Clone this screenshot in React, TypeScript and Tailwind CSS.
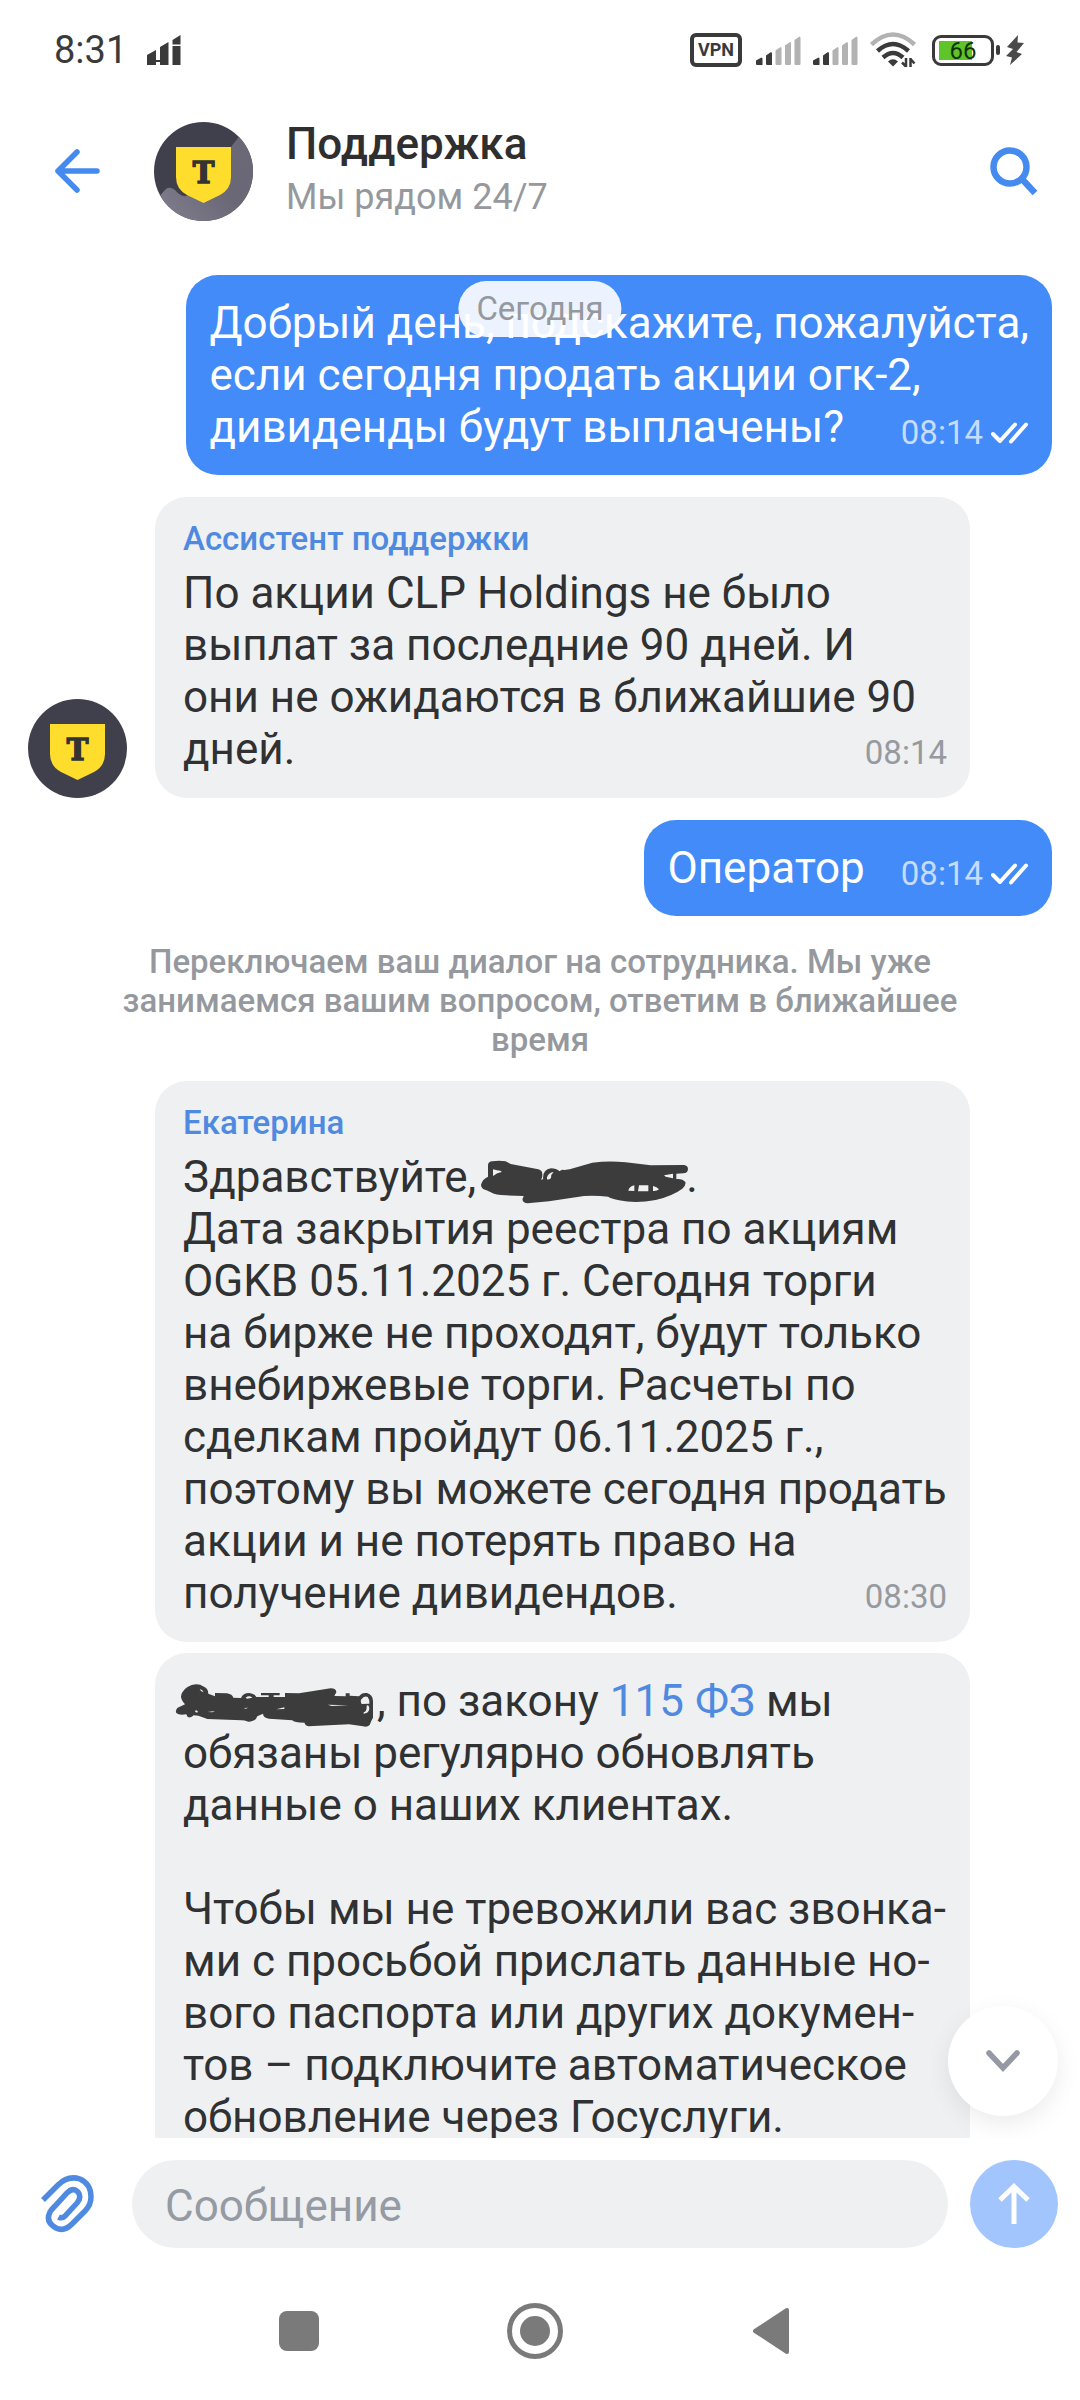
import type { ReactNode } from 'react';

/* ---------- Status bar icons ---------- */

function SignalBars() {
  return (
    <svg width="45" height="30" viewBox="0 0 45 30" aria-hidden="true">
      <path d="M0 25.5 L5.5 22.5 Q6.5 22.5 6.5 24 V30 H1 Q0 30 0 28.5Z" fill="#3a3a3a" />
      <path d="M10 20.5 L15 17 Q16 17 16 18.5 V30 H11 Q10 30 10 28.5Z" fill="#3a3a3a" />
      <path d="M19.500 15.500 L24.500 12 Q25.500 12 25.500 13.500 V28.500 Q25.500 30 24.500 30 H20.500 Q19.500 30 19.500 28.500Z" fill="#b2b2b2" />
      <path d="M29 10.500 L34 7 Q35 7 35 8.500 V28.500 Q35 30 34 30 H30 Q29 30 29 28.500Z" fill="#b2b2b2" />
      <path d="M38.500 5 L43.500 1.500 Q44.500 1.500 44.500 3 V28.500 Q44.500 30 43.500 30 H39.500 Q38.500 30 38.500 28.500Z" fill="#b2b2b2" />
    </svg>
  );
}

function WifiIcon() {
  return (
    <svg width="46" height="36" viewBox="0 0 46 36" fill="none" strokeWidth="4.500" aria-hidden="true">
      <path d="M1.500 12.500 Q23 -7.500 44.500 12.500" stroke="#b2b2b2" />
      <path d="M7.500 19 Q23 5 38.500 19" stroke="#3a3a3a" />
      <path d="M13 25.500 Q23 16.500 33 25.500" stroke="#3a3a3a" />
      <path d="M18 29.500 Q23 25 28 29.500 L23 34.500Z" fill="#3a3a3a" />
      <path d="M36 26 V35 M36 34.500 L32 30.500 M40.500 35 V26 M40.500 27 L44.500 31.500" stroke="#3a3a3a" strokeWidth="2.500" />
    </svg>
  );
}

function StatusBar() {
  return (
    <div className="flex h-[100px] shrink-0 items-center justify-between pr-14 pl-[54px]">
      <div className="flex items-center gap-5">
        <span className="text-[38px] text-[#3a3a3a]">8:31</span>
        <svg width="34" height="30" viewBox="0 0 34 30" fill="#3a3a3a" aria-hidden="true">
          <path d="M0 20 L9 15 V25 H13 V12 L21.500 7 V30 H13 V27 H9 V30 H0Z" />
          <path d="M25.500 5 L33.500 0 V9.500 H25.500Z M25.500 11 H33.500 V30 H25.500Z" />
        </svg>
      </div>
      <div className="flex items-center">
        <span className="flex h-[34px] w-[52px] items-center justify-center rounded-md border-4 border-[#3a3a3a] text-lg leading-none font-bold text-[#3a3a3a]">
          VPN
        </span>
        <span className="ml-3.5 flex gap-3">
          <SignalBars />
          <SignalBars />
        </span>
        <span className="ml-3">
          <WifiIcon />
        </span>
        <span className="ml-4 flex h-[31px] w-[62px] rounded-[9px] border-3 border-[#3a3a3a] bg-[linear-gradient(#5fc32a,#5fc32a)] bg-[length:33px_19px] bg-[position:4px_3px] bg-no-repeat">
          <span className="w-full text-center text-2xl leading-[26px] text-[#12320a]">66</span>
        </span>
        <span className="ml-0.5 h-2.5 w-1 rounded-sm bg-[#3a3a3a]" />
        <svg className="ml-1.5" width="18" height="30" viewBox="0 0 18 30" fill="#4a4a4a" aria-hidden="true">
          <path d="M12 0 L1 12 L7 14 L0 21 L6 22.500 L4 30 L16 19 L10.500 17 L18 8 L11.500 7.500Z" />
        </svg>
      </div>
    </div>
  );
}

/* ---------- Header ---------- */

function Avatar({ scenery = false }: { scenery?: boolean }) {
  return (
    <svg className="size-[99px] shrink-0 rounded-full" viewBox="0 0 99 99" role="img" aria-label="Поддержка">
      <defs>
        <linearGradient id="hill" x1="1" y1="0" x2="0" y2="1">
          <stop offset="0" stopColor="#6b6978" />
          <stop offset="0.5" stopColor="#6a6877" />
          <stop offset="1" stopColor="#83818f" />
        </linearGradient>
      </defs>
      <rect width="99" height="99" fill="#403f4c" />
      {scenery && (
        <path
          d="M0 80 L12 67 Q16 64 21 68 Q27 75 32 74 Q45 68 60 50 Q74 28 84 16 L99 0 V99 H0Z"
          fill="url(#hill)"
        />
      )}
      <path d="M22 25 H77 V55 Q77 67 66 73 L49.500 81 L33 73 Q22 67 22 55Z" fill="#ffdd2d" />
      <text
        x="49.500"
        y="61"
        textAnchor="middle"
        fontSize="29"
        fontWeight="700"
        fontFamily="'DejaVu Serif', serif"
        fill="#333333"
        stroke="#333333"
        strokeWidth="1.500"
      >
        T
      </text>
    </svg>
  );
}

function Header() {
  return (
    <header className="flex shrink-0 items-center px-9 py-[18px]">
      <button type="button" aria-label="Назад" className="flex w-20 justify-center">
        <svg width="48" height="48" viewBox="0 0 48 48" fill="none" stroke="#458bef" strokeWidth="5.500" strokeLinecap="round" strokeLinejoin="round">
          <path d="M45 24 H6 M25 5 L6 24 L25 43" />
        </svg>
      </button>
      <div className="ml-[38px]">
        <Avatar scenery />
      </div>
      <div className="ml-[33px] flex-1">
        <h1 className="text-[44px] leading-[52px] font-medium text-[#2f2f2f]">Поддержка</h1>
        <p className="text-4xl leading-[54px] text-[#95999e]">Мы рядом 24/7</p>
      </div>
      <button type="button" aria-label="Поиск" className="flex justify-center">
        <svg width="60" height="50" viewBox="0 0 60 50" fill="none" stroke="#458bef">
          <circle cx="26" cy="21" r="16.500" strokeWidth="6.500" />
          <path d="M38 33 L51 47" strokeWidth="6.500" />
        </svg>
      </button>
    </header>
  );
}

/* ---------- Messages ---------- */

function Ticks() {
  return (
    <svg width="38" height="22" viewBox="0 0 38 22" fill="none" stroke="#ffffff" strokeWidth="4" strokeLinecap="round" strokeLinejoin="round" aria-hidden="true">
      <path d="M2 12 L9 19 L24 2.500 M20 19.500 L35 2.500" />
    </svg>
  );
}

function Outgoing({ time, children }: { time: string; children: ReactNode }) {
  return (
    <div className="flex justify-end pr-7">
      <p className="rounded-[32px] bg-[#428bf9] px-[23px] py-[22px] text-[44px] leading-[52px] whitespace-pre-line text-white">
        {children}
        <span className="float-right mt-1.5 -mb-1.5 ml-9 flex items-center gap-2 text-[33px] text-[#c6dcfd]">
          <time>{time}</time>
          <Ticks />
        </span>
      </p>
    </div>
  );
}

type IncomingProps = { name?: string; time?: string; avatar?: boolean; children: ReactNode };

function Incoming({ name, time, avatar, children }: IncomingProps) {
  return (
    <div className="flex items-end gap-7 pr-[110px] pl-7">
      {avatar ? <Avatar /> : <div className="w-[99px] shrink-0" />}
      <div className="flex-1 rounded-[32px] bg-[#eef0f2] pt-[22px] pr-[23px] pb-[23px] pl-7">
        {name && <div className="mb-2 text-[33px] leading-10 font-medium text-[#4f8ae0]">{name}</div>}
        <p className="text-[44px] leading-[52px] whitespace-pre-line text-[#303133]">
          {children}
          {time && <time className="float-right mt-1 -mb-1 text-[33px] text-[#969a9f]">{time}</time>}
        </p>
      </div>
    </div>
  );
}

/* Marker strokes that hide the client's name */

function MarkerWide() {
  return (
    <svg className="-mr-1 -mb-2 ml-1 inline align-[-4px]" width="210" height="44" viewBox="33 32 630 132" fill="#3c3c3c" aria-hidden="true">
      <path
        fillRule="evenodd"
        d="M57 48 Q57 37 70 36 Q90 32 110 36 Q118 40 125 44 L208 60 Q220 63 220 74 Q221 86 216 90 Q224 92 222 86 Q222 60 246 57 Q262 57 272 66 Q276 60 286 62 L302 60 L370 40 Q420 34 470 39 L545 48 L645 47 Q657 48 657 60 Q656 72 643 72 L622 73 L622 89 Q640 87 649 98 Q652 108 640 118 Q610 140 560 152 Q500 164 450 153 Q420 146 418 142 Q380 138 345 140 L240 156 L176 162 Q158 160 161 147 Q165 142 163 140 L110 138 Q80 138 64 128 Q52 122 50 122 Q36 118 36 106 Q40 90 57 82Z
           M72 60 V80 Q85 70 98 68 Q96 63 84 63Z
           M234 84 Q238 70 254 68 Q246 74 246 86 Q240 92 234 90Z
           M585 78 L612 73 V87 L590 82Z
           M478 124 Q480 112 496 108 V125Z M510 108 H538 V126 H507Z M552 125 V110 Q564 112 570 120 Q564 126 552 125Z"
      />
    </svg>
  );
}

function MarkerNarrow() {
  return (
    <svg className="mr-0.5 -mb-2 -ml-2 inline align-[-4px]" width="200" height="45" viewBox="28 26 600 135" fill="#3c3c3c" aria-hidden="true">
      <path
        fillRule="evenodd"
        d="M46 66 Q50 42 78 32 Q100 26 112 36 Q128 42 128 58 L148 66 V56 L184 57 Q200 60 203 70 L226 71 Q232 56 250 56 Q268 58 272 68 H309 V63 H286 V56 H342 V63 H324 V68 H358 V56 L400 57 L495 42 Q512 42 512 54 L506 65 L540 66 V57 H552 V64 L580 66 Q588 54 604 56 Q622 62 622 80 V130 Q616 140 612 152 Q604 160 592 156 L550 150 L428 156 Q416 152 417 145 Q384 145 380 138 L310 133 Q292 130 292 118 L275 126 Q270 142 248 142 Q236 138 228 138 L125 134 L98 124 L84 123 Q76 132 66 128 L62 120 Q40 124 32 116 Q28 108 36 100 L58 90 Q46 78 46 66Z
           M102 44 Q112 46 114 54 L106 50Z M240 70 Q250 62 260 70 L244 73Z M88 110 Q92 104 97 112 Q92 118 88 110Z
           M126 113 L148 110 L140 114Z M234 101 L248 100 L240 103Z M332 105 L356 99 V104Z M486 91 L548 93 L498 95Z
           M586 76 Q596 62 606 68 Q612 76 611 88 L588 89 Q584 82 586 76Z
           M594 114 Q604 112 603 94 Q610 90 611 104 Q608 118 594 118Z"
      />
    </svg>
  );
}

function Chat() {
  return (
    <main className="relative min-h-0 flex-1 overflow-hidden pt-[33px]">
      <div className="flex flex-col gap-[22px]">
        <Outgoing time="08:14">
          {'Добрый день, подскажите, пожалуйста,\nесли сегодня продать акции огк-2,\nдивиденды будут выплачены?'}
        </Outgoing>
        <Incoming name="Ассистент поддержки" time="08:14" avatar>
          {'По акции CLP Holdings не было\nвыплат за последние 90 дней. И\nони не ожидаются в ближайшие 90\nдней.'}
        </Incoming>
        <Outgoing time="08:14">Оператор</Outgoing>
        <p className="px-[110px] pt-1 text-center text-[33px] leading-[39px] font-medium text-[#95999e]">
          Переключаем ваш диалог на сотрудника. Мы уже занимаемся вашим вопросом, ответим в ближайшее время
        </p>
        <div className="flex flex-col gap-[11px]">
          <Incoming name="Екатерина" time="08:30">
            Здравствуйте,
            <MarkerWide />
            {'.\nДата закрытия реестра по акциям\nOGKB 05.11.2025 г. Сегодня торги\nна бирже не проходят, будут только\nвнебиржевые торги. Расчеты по\nсделкам пройдут 06.11.2025 г.,\nпоэтому вы можете сегодня продать\nакции и не потерять право на\nполучение дивидендов.'}
          </Incoming>
          <Incoming>
            <MarkerNarrow />
            {', по закону '}
            <a href="#115" className="text-[#4f8ae0]">
              115 ФЗ
            </a>
            {' мы\nобязаны регулярно обновлять\nданные о наших клиентах.\n\nЧтобы мы не тревожили вас звонка-\nми с просьбой прислать данные но-\nвого паспорта или других докумен-\nтов – подключите автоматическое\nобновление через Госуслуги.'}
          </Incoming>
        </div>
      </div>

      {/* Floating date */}
      <div className="absolute top-[39px] left-1/2 -translate-x-1/2 rounded-[28px] bg-white/90 px-[18px] text-[33px] leading-[56px] text-[#95999e]">
        Сегодня
      </div>

      {/* Scroll to bottom */}
      <button
        type="button"
        aria-label="Вниз"
        className="absolute right-[22px] bottom-[22px] flex size-[110px] items-center justify-center rounded-full bg-white shadow-[0_8px_24px_rgba(0,0,0,0.08)]"
      >
        <svg width="34" height="24" viewBox="0 0 34 24" fill="none" stroke="#9699a3" strokeWidth="5.500" strokeLinecap="round">
          <path d="M3 4 L17 19 L31 4" />
        </svg>
      </button>
    </main>
  );
}

/* ---------- Bottom ---------- */

function Composer() {
  return (
    <form className="flex shrink-0 items-center px-[22px] pt-[22px]">
      <button type="button" aria-label="Прикрепить файл" className="flex w-[92px] justify-center">
        <svg width="54" height="58" viewBox="0 0 54 58" fill="none" stroke="#4f8ae0" strokeWidth="5.500">
          <path d="M2 25 L17 10 Q27 0 39 4 Q50 9 50 22 Q50 30 44 36 L31 49 Q23 57 15 53 Q4 47 9 37 Q10 35 14 31 L26 18 Q32 12 37 17 Q41 22 36 28 L24 41 Q21 44 17.500 42" />
        </svg>
      </button>
      <input
        type="text"
        aria-label="Сообщение"
        placeholder="Сообщение"
        className="ml-[18px] h-[88px] min-w-0 flex-1 rounded-full bg-[#eef0f2] px-[33px] pt-1 text-[44px] text-[#303133] outline-none placeholder:text-[#959aa3]"
      />
      <button type="submit" aria-label="Отправить" className="ml-[22px] flex size-[88px] shrink-0 items-center justify-center rounded-full bg-[#a1c5fc]">
        <svg width="32" height="42" viewBox="0 0 32 42" fill="none" stroke="#ffffff" strokeWidth="5">
          <path d="M16 41 V4 M2 17 L16 3.500 L30 17" />
        </svg>
      </button>
    </form>
  );
}

function SystemNav() {
  return (
    <nav className="flex h-[152px] shrink-0 items-center justify-center gap-[180px] pt-3.5 pr-2.5">
      <button type="button" aria-label="Недавние" className="flex w-14 justify-center">
        <span className="size-10 rounded-lg bg-[#7a7a7a]" />
      </button>
      <button type="button" aria-label="Домой" className="flex size-14 items-center justify-center rounded-full border-5 border-[#7a7a7a]">
        <span className="size-[30px] rounded-full bg-[#7a7a7a]" />
      </button>
      <button type="button" aria-label="Назад" className="flex w-14 justify-center">
        <svg width="38" height="48" viewBox="0 0 38 48" fill="#7a7a7a" stroke="#7a7a7a" strokeWidth="4" strokeLinejoin="round">
          <path d="M35 3 V45 L3 24Z" />
        </svg>
      </button>
    </nav>
  );
}

export default function App() {
  return (
    <div className="flex h-screen flex-col bg-white font-[Roboto,sans-serif]">
      <StatusBar />
      <Header />
      <Chat />
      <Composer />
      <SystemNav />
    </div>
  );
}
